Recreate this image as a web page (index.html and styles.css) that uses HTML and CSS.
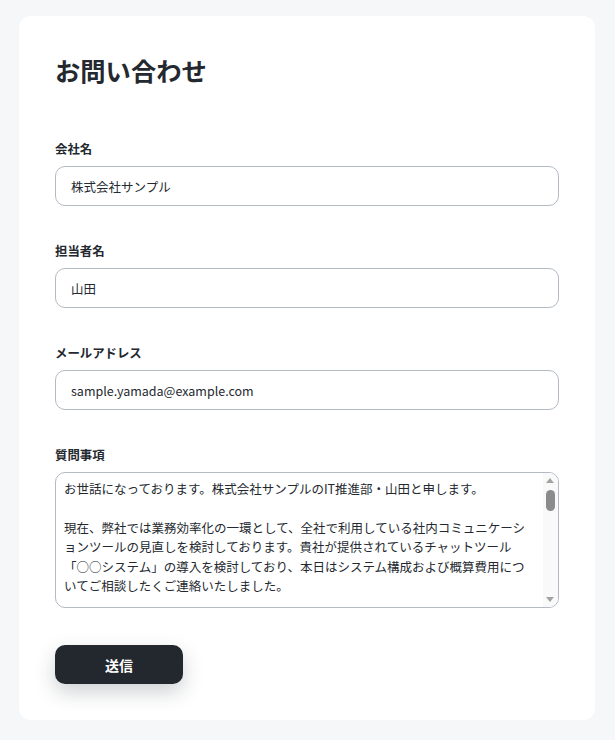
FILE: index.html
```html
<!DOCTYPE html>
<html lang="ja">
<head>
	<meta charset="utf-8" />
	<title>お問い合わせ</title>
	<link rel="stylesheet" href="styles.css">
</head>
<body>
	<div class="card">
		<h1 class="title">お問い合わせ</h1>
		<form class="form">
			<div class="field">
				<label for="company">会社名</label>
				<input type="text" id="company" value="株式会社サンプル">
			</div>
			<div class="field">
				<label for="person">担当者名</label>
				<input type="text" id="person" value="山田">
			</div>
			<div class="field">
				<label for="email">メールアドレス</label>
				<input type="email" id="email" value="sample.yamada@example.com">
			</div>
			<div class="field">
				<label for="question">質問事項</label>
				<div class="textarea-wrap">
					<textarea id="question">お世話になっております。株式会社サンプルのIT推進部・山田と申します。

現在、弊社では業務効率化の一環として、全社で利用している社内コミュニケーションツールの見直しを検討しております。貴社が提供されているチャットツール「○○システム」の導入を検討しており、本日はシステム構成および概算費用についてご相談したくご連絡いたしました。

つきましては、以下の点についてご教示いただけますでしょうか。

1. 既存のActive Directoryとのシングルサインオン連携の可否
2. 約300名規模で利用する場合の月額費用の目安
3. 過去のメッセージやファイルのデータ移行に関するサポート内容
4. オンプレミス環境での運用に対応しているかどうか
5. 導入までに必要な期間と、導入支援の有無

また、可能であれば無料トライアルの実施についてもご相談させていただければ幸いです。社内での比較検討のため、来月末を目処に判断したいと考えております。

お忙しいところ恐れ入りますが、ご確認のほどよろしくお願いいたします。</textarea>
					
					<div class="scrollbar">
						<span class="arrow arrow-up"></span>
						<span class="thumb"></span>
						<span class="arrow arrow-down"></span>
					</div>
				</div>
			</div>
			<div class="actions">
				<button type="button" class="submit">送信</button>
			</div>
		</form>
	</div>
</body>
</html>
```

FILE: styles.css
```css
body {
	margin: 0;
	padding: 16px 20px 20px 19px;
	background-color: #f6f7f9;
	font-family: "Noto Sans CJK JP", "Noto Sans", sans-serif;
	color: #24292f;
}

.card {
	padding: 36px;
	background-color: #fff;
	border-radius: 12px;
}

.title {
	margin: 0 0 52px;
	font-size: 25.3px;
	line-height: 36px;
	font-weight: 700;
}

.field {
	display: flex;
	flex-direction: column;
	gap: 8px;
	margin-bottom: 36px;
}

.field label {
	font-size: 12.4px;
	line-height: 18px;
	font-weight: 700;
}

.field input,
.field textarea {
	font-family: inherit;
	font-size: 12.5px;
	color: #24292f;
	border: 1px solid #b3bac4;
	border-radius: 10px;
	background-color: #fff;
	box-sizing: border-box;
	width: 100%;
	margin: 0;
	display: block;
}

.field input {
	height: 40px;
	padding: 10px 15px;
	line-height: 18px;
}

.textarea-wrap {
	position: relative;
}

.field textarea {
	height: 136px;
	padding: 6px 29px 6px 8px;
	line-height: 19.4px;
	overflow: hidden;
	resize: none;
}

.scrollbar {
	position: absolute;
	top: 1px;
	right: 1px;
	bottom: 1px;
	width: 15px;
	background-color: #f9f9f9;
	border-radius: 0 9px 9px 0;
}

.arrow {
	position: absolute;
	left: 3px;
	width: 0;
	height: 0;
	border-left: 4.5px solid transparent;
	border-right: 4.5px solid transparent;
}

.arrow-up {
	top: 5px;
	border-bottom: 5px solid #a3a3a3;
}

.arrow-down {
	bottom: 5px;
	border-top: 5px solid #a3a3a3;
}

.thumb {
	position: absolute;
	top: 17px;
	left: 3px;
	width: 9px;
	height: 21px;
	border-radius: 5px;
	background-color: #8b8b8b;
}

.actions {
	display: flex;
	padding-top: 1px;
}

.submit {
	width: 128px;
	height: 39px;
	border: none;
	border-radius: 10px;
	background-color: #23282f;
	color: #fff;
	font-family: inherit;
	font-size: 14px;
	font-weight: 700;
	box-shadow: 0 8px 20px rgba(30, 40, 55, 0.22);
	cursor: pointer;
}
```
